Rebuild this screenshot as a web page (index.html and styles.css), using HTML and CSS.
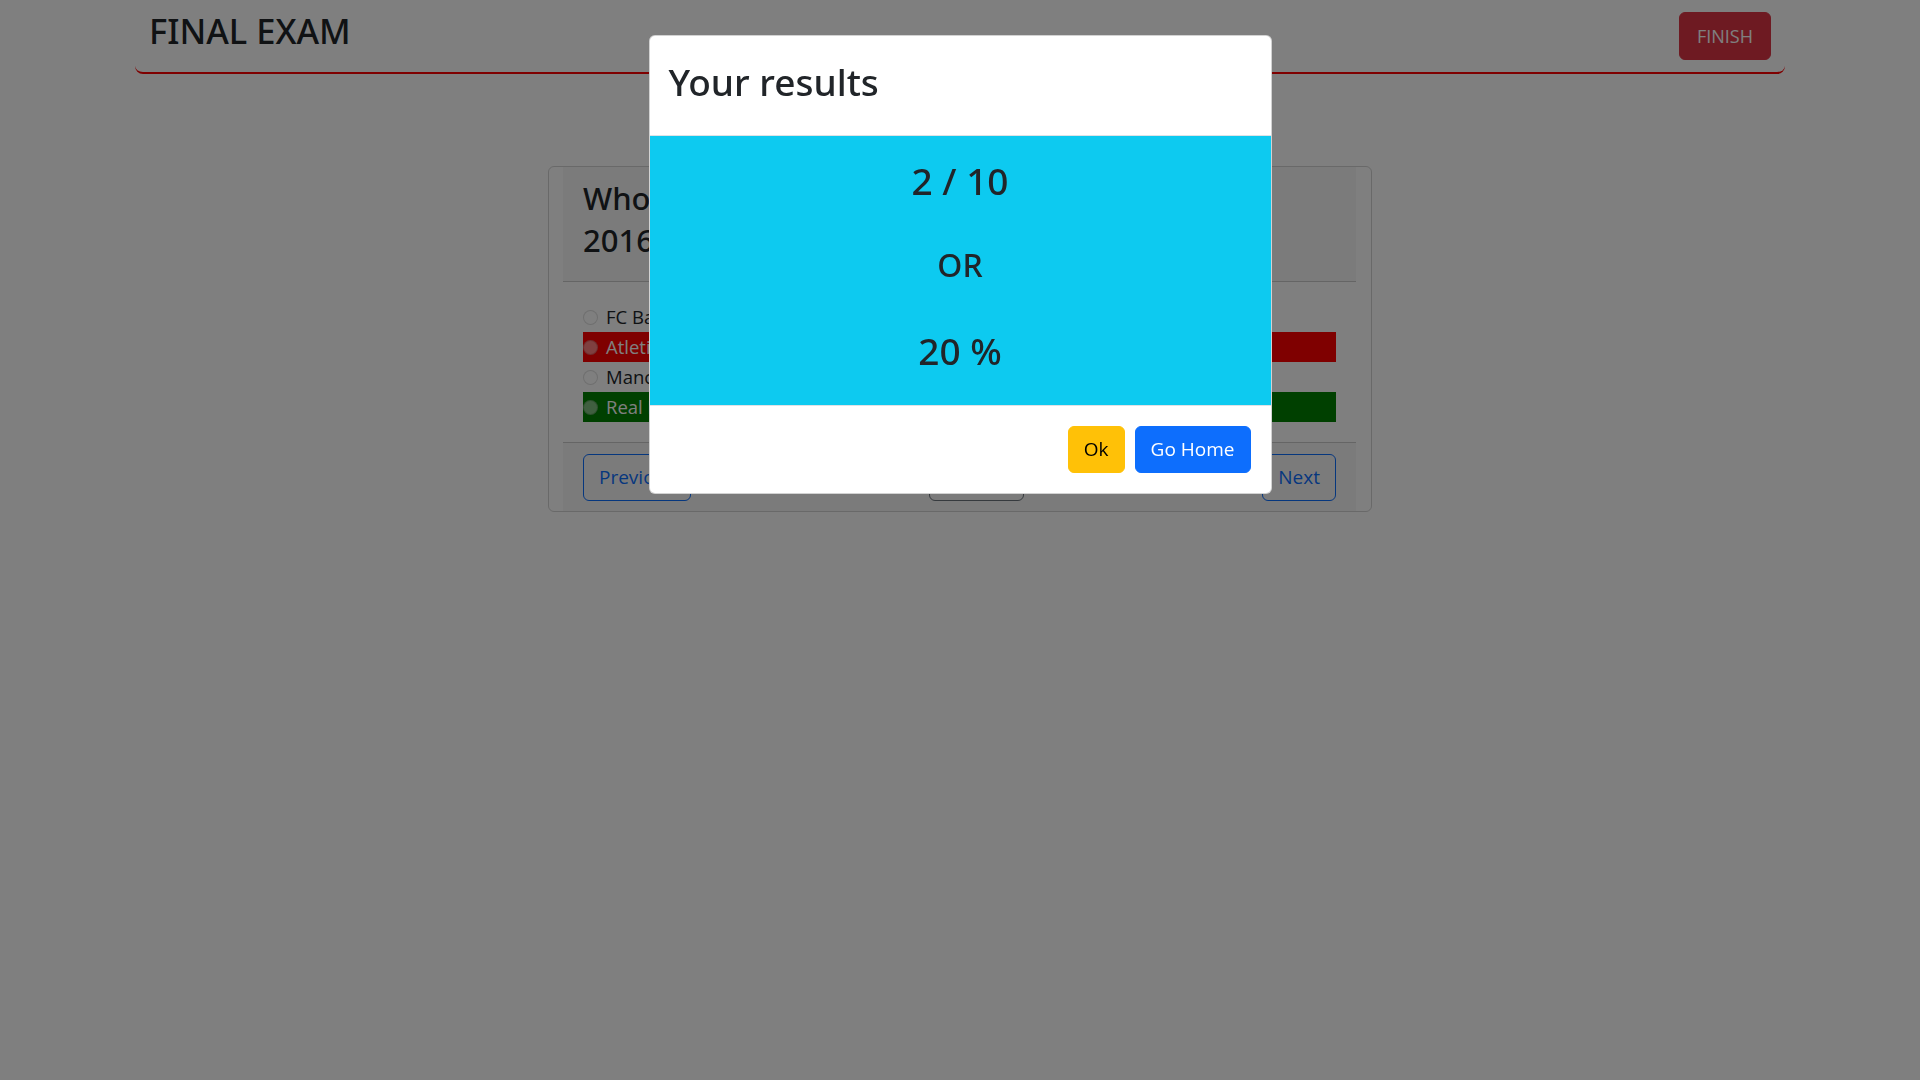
FILE: index.html
```html
<!DOCTYPE html>
<html lang="en">
<head>
<meta charset="utf-8">
<title>Final Exam</title>
<link rel="stylesheet" href="styles.css">
</head>
<body>
<div class="page">
  <header class="topbar">
    <h1 class="brand">FINAL EXAM</h1>
    <button class="btn btn-danger">FINISH</button>
  </header>
  <main class="exam">
    <section class="card">
      <div class="card-header">
        <h2 class="question">Who won the UEFA Champions League final in<br>2016?</h2>
      </div>
      <div class="card-body">
        <ul class="options">
          <li class="option"><span class="radio"></span><span>FC Barcelona</span></li>
          <li class="option wrong"><span class="radio"></span><span>Atletico Madrid</span></li>
          <li class="option"><span class="radio"></span><span>Manchester City</span></li>
          <li class="option correct"><span class="radio"></span><span>Real Madrid</span></li>
        </ul>
      </div>
      <div class="card-footer">
        <button class="btn btn-outline-primary">Previous</button>
        <button class="btn btn-outline-secondary">Submit</button>
        <button class="btn btn-outline-primary">Next</button>
      </div>
    </section>
  </main>
</div>
<div class="backdrop"></div>
<div class="modal">
  <div class="modal-content">
    <div class="modal-header">
      <h1 class="modal-title">Your results</h1>
    </div>
    <div class="modal-body">
      <div class="score">2 / 10</div>
      <div class="or">OR</div>
      <div class="score">20 %</div>
    </div>
    <div class="modal-footer">
      <button class="btn btn-warning">Ok</button>
      <button class="btn btn-primary">Go Home</button>
    </div>
  </div>
</div>
</body>
</html>
```
FILE: styles.css
```css
* { box-sizing: border-box; }
html, body { margin: 0; }
body {
  font-family: "Open Sans", "Noto Sans", sans-serif;
  color: #212529;
  background: #fff;
}

.topbar {
  width: 1650px;
  height: 74px;
  margin: 0 auto;
  padding: 12px 14px 12px 14px;
  display: flex;
  justify-content: space-between;
  align-items: flex-start;
  border-bottom: 2px solid #ff0000;
  border-radius: 0 0 8px 8px;
}
.brand {
  margin: 0;
  font-family: "Noto Sans", "Open Sans", sans-serif;
  font-size: 34.5px;
  font-weight: 500;
  line-height: 38px;
}

.btn {
  font-family: inherit;
  font-size: 19px;
  height: 47px;
  line-height: 45px;
  padding: 0 15px;
  border: 1px solid transparent;
  border-radius: 6px;
  background: transparent;
  cursor: pointer;
}
.btn-danger {
  background: #dc3545;
  border-color: #dc3545;
  color: #fff;
  font-size: 18px;
  height: 48px;
  line-height: 46px;
  padding: 0 17px;
}
.btn-outline-primary { color: #0d6efd; border-color: #0d6efd; }
.btn-outline-secondary { color: #6c757d; border-color: #6c757d; }
.btn-warning { background: #ffc107; border-color: #ffc107; color: #000; }
.btn-primary { background: #0d6efd; border-color: #0d6efd; color: #fff; }

.card {
  width: 824px;
  margin: 92px auto 0;
  padding: 0 15px 0 14px;
  border: 1px solid rgba(0, 0, 0, .175);
  border-radius: 6px;
}
.card-header {
  background: rgba(0, 0, 0, .03);
  border-bottom: 1px solid rgba(0, 0, 0, .175);
  padding: 11px 20px 20px;
}
.question {
  margin: 0;
  font-family: "Noto Sans", "Open Sans", sans-serif;
  font-size: 31px;
  font-weight: 500;
  line-height: 41.5px;
}
.card-body { padding: 20px 20px 20px; }
.options { list-style: none; margin: 0; padding: 0; }
.option {
  display: flex;
  align-items: center;
  height: 30px;
  font-size: 18.5px;
  line-height: 30px;
}
.radio {
  width: 15px;
  height: 15px;
  border-radius: 50%;
  border: 1px solid rgba(0, 0, 0, .25);
  background: #fff;
  opacity: .5;
  margin-right: 8px;
  flex: none;
}
.wrong { background: #ff0000; color: #fff; }
.correct { background: #008000; color: #fff; }
.card-footer {
  background: rgba(0, 0, 0, .03);
  border-top: 1px solid rgba(0, 0, 0, .175);
  padding: 11px 20px 10px;
  display: flex;
  justify-content: space-between;
}

.backdrop {
  position: fixed;
  inset: 0;
  background: rgba(0, 0, 0, .5);
}
.modal {
  position: fixed;
  inset: 0;
}
.modal-content {
  width: 623px;
  margin: 35px auto 0;
  background: #fff;
  border: 1px solid rgba(0, 0, 0, .175);
  border-radius: 6px;
  overflow: hidden;
}
.modal-header {
  padding: 24px 19px 23px;
  border-bottom: 1px solid #dee2e6;
}
.modal-title {
  margin: 0 0 8px;
  font-family: "Noto Sans", "Open Sans", sans-serif;
  font-size: 37px;
  font-weight: 500;
  line-height: 44.4px;
}
.modal-body {
  background: #0dcaf0;
  padding: 23px 16px 32px;
  text-align: center;
  font-family: "Noto Sans", "Open Sans", sans-serif;
  font-weight: 500;
}
.score {
  font-size: 37px;
  line-height: 44.4px;
}
.or {
  font-size: 32px;
  line-height: 37.2px;
  margin: 42px 0 46px;
}
.modal-footer {
  border-top: 1px solid #dee2e6;
  padding: 20px;
  display: flex;
  justify-content: flex-end;
  gap: 10px;
}
```
